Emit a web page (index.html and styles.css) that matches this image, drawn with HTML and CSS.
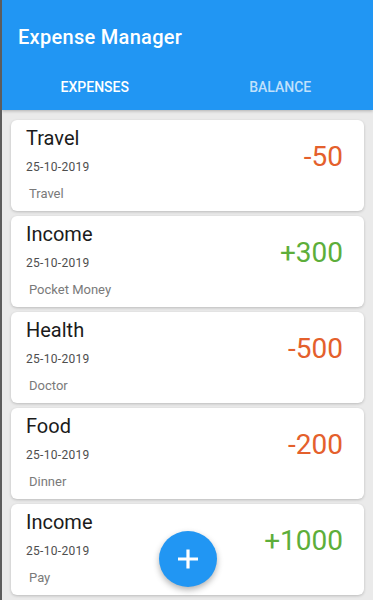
FILE: index.html
```html
<!DOCTYPE html>
<html>
<head>
<meta charset="utf-8">
<link rel="stylesheet" href="styles.css">
</head>
<body>
<div class="app">
  <header class="appbar">
    <div class="toolbar">Expense Manager</div>
    <nav class="tabs">
      <div class="tab active">EXPENSES</div>
      <div class="tab">BALANCE</div>
    </nav>
  </header>
  <main class="list">
    <div class="card">
      <div class="info">
        <div class="title">Travel</div>
        <div class="date">25-10-2019</div>
        <div class="note">Travel</div>
      </div>
      <div class="amount neg">-50</div>
    </div>
    <div class="card">
      <div class="info">
        <div class="title">Income</div>
        <div class="date">25-10-2019</div>
        <div class="note">Pocket Money</div>
      </div>
      <div class="amount pos">+300</div>
    </div>
    <div class="card">
      <div class="info">
        <div class="title">Health</div>
        <div class="date">25-10-2019</div>
        <div class="note">Doctor</div>
      </div>
      <div class="amount neg">-500</div>
    </div>
    <div class="card">
      <div class="info">
        <div class="title">Food</div>
        <div class="date">25-10-2019</div>
        <div class="note">Dinner</div>
      </div>
      <div class="amount neg">-200</div>
    </div>
    <div class="card">
      <div class="info">
        <div class="title">Income</div>
        <div class="date">25-10-2019</div>
        <div class="note">Pay</div>
      </div>
      <div class="amount pos">+1000</div>
    </div>
  </main>
  <button class="fab" aria-label="Add">
    <svg width="24" height="22" viewBox="0 0 24 22"><path d="M12 1.5V20.5M2 11H22" stroke="#fff" stroke-width="3.2" fill="none"/></svg>
  </button>
</div>
</body>
</html>
```

FILE: styles.css
```css
* { box-sizing: border-box; }
html, body {
  margin: 0;
  padding: 0;
}
body {
  width: 373px;
  height: 600px;
  overflow: hidden;
  background: #eaeaea;
  font-family: Roboto, "Noto Sans", "Liberation Sans", sans-serif;
  border-left: 2px solid #5c5c5c;
}
.app {
  position: relative;
  height: 600px;
}
.appbar {
  background: #2196f3;
  color: #fff;
  height: 110px;
  box-shadow: 0 1px 3px rgba(0,0,0,0.25);
}
.toolbar {
  height: 64px;
  padding: 23px 0 0 16px;
  font-size: 20px;
  line-height: 28px;
  font-weight: 500;
  letter-spacing: 0.3px;
}
.tabs {
  display: flex;
  height: 46px;
}
.tab {
  flex: 1;
  text-align: center;
  font-size: 14px;
  line-height: 46px;
  font-weight: 500;
  color: rgba(255,255,255,0.72);
}
.tab.active {
  color: #fff;
}
.list {
  display: flex;
  flex-direction: column;
  gap: 5px;
  padding: 10px 9px 0 9px;
}
.card {
  height: 91px;
  background: #fff;
  border-radius: 6px;
  box-shadow: 0 1px 3px rgba(0,0,0,0.2);
  display: flex;
  justify-content: space-between;
  align-items: flex-start;
  padding: 0 21px 0 15px;
}
.info {
  display: flex;
  flex-direction: column;
  padding-top: 7px;
}
.title {
  font-size: 20px;
  line-height: 22px;
  color: #1b1b1b;
}
.date {
  margin-top: 10px;
  font-size: 12px;
  line-height: 16px;
  font-weight: 400;
  color: #4e4e4e;
  letter-spacing: 0.3px;
}
.note {
  margin-top: 11px;
  padding-left: 3px;
  font-size: 13px;
  line-height: 16px;
  color: #7a7a7a;
}
.amount {
  margin-top: 21px;
  font-size: 28px;
  line-height: 32px;
}
.amount.neg { color: #e4602c; }
.amount.pos { color: #5dae3a; }
.fab {
  position: absolute;
  left: 157px;
  top: 531px;
  width: 58px;
  height: 56px;
  border: none;
  border-radius: 50%;
  background: #2196f3;
  box-shadow: 0 3px 6px rgba(0,0,0,0.3);
  display: flex;
  align-items: center;
  justify-content: center;
  padding: 0;
}
.fab svg { display: block; }
```
